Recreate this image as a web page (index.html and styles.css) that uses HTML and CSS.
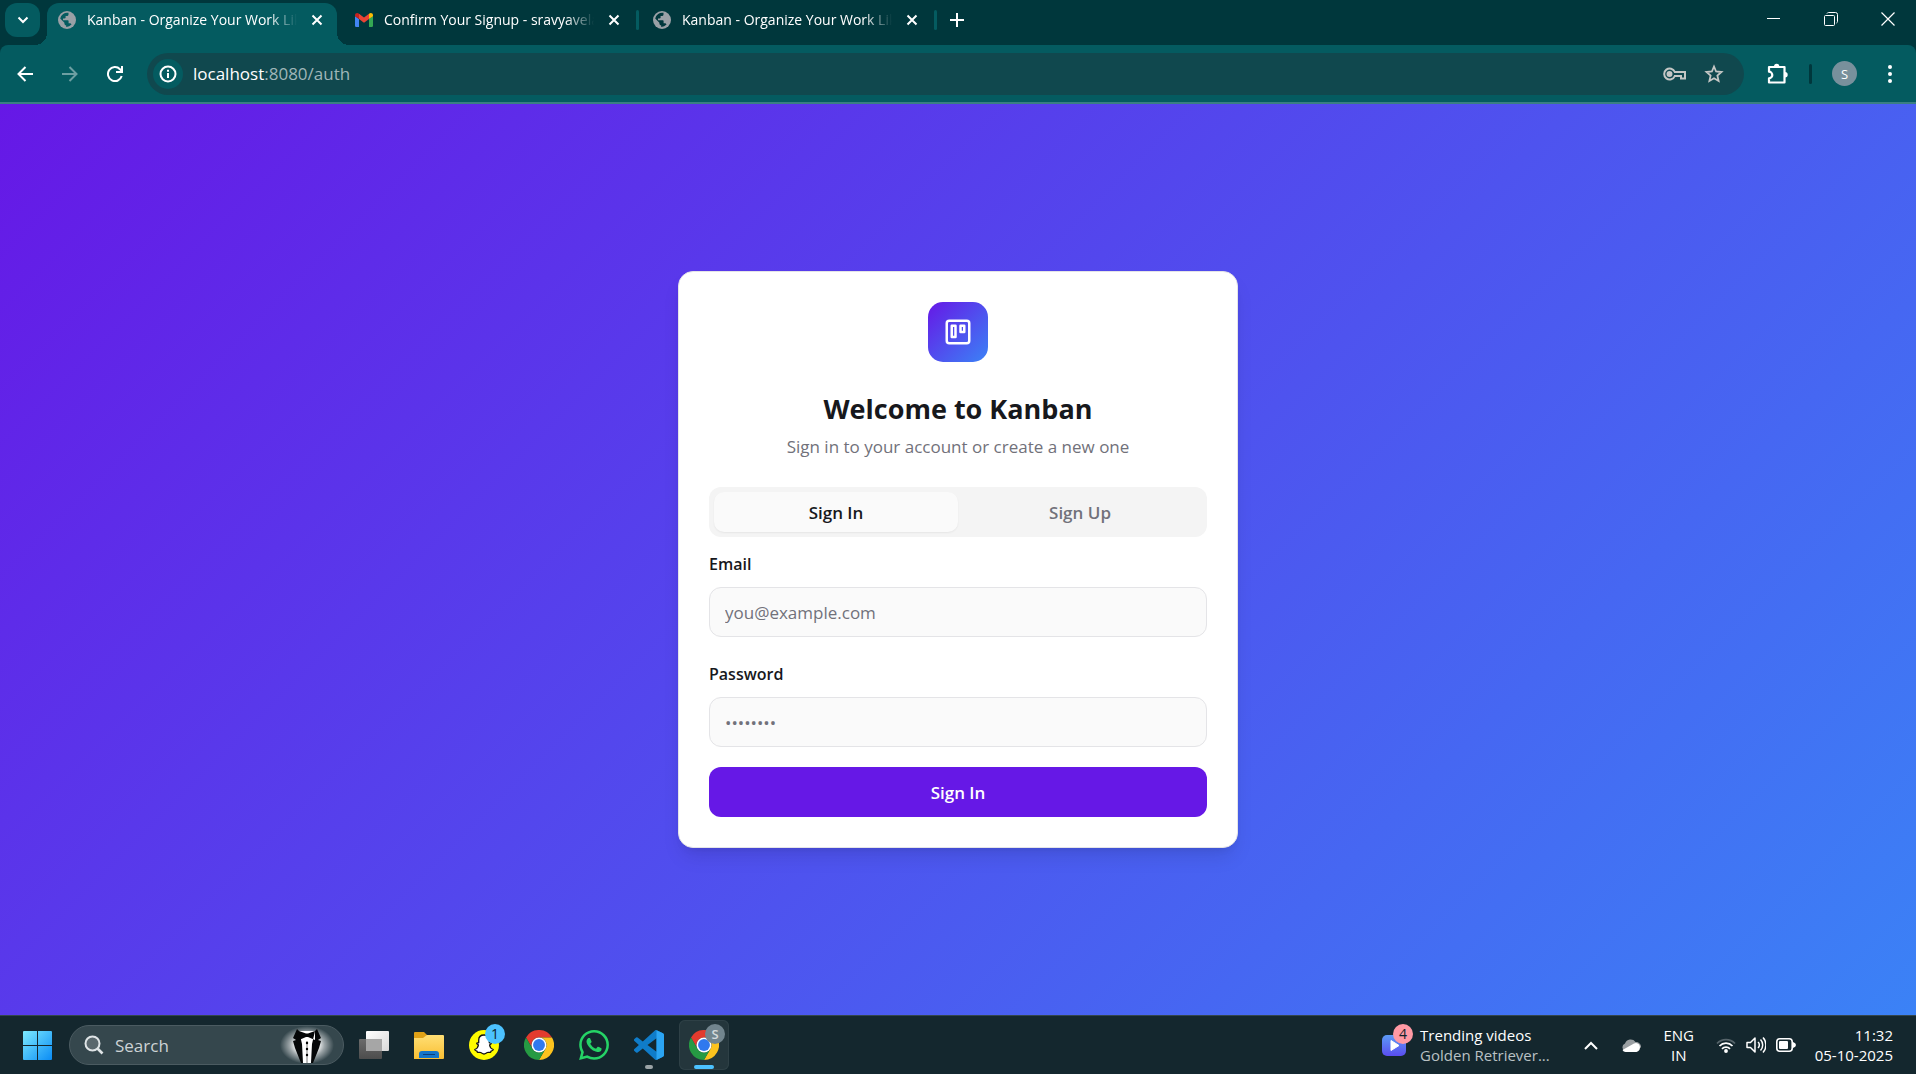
FILE: index.html
```
<!DOCTYPE html>
<html lang="en">
<head>
<meta charset="utf-8">
<meta name="viewport" content="width=device-width, initial-scale=1">
<title>Kanban - Organize Your Work Like Never Before</title>
<link rel="stylesheet" href="styles.css">
</head>
<body>
<svg class="defs" aria-hidden="true">
  <defs>
    <linearGradient id="g-win" x1="0" y1="0" x2="1" y2="1"><stop offset="0" stop-color="#7deaff"/><stop offset="1" stop-color="#0a8cf5"/></linearGradient>
    <linearGradient id="g-folder" x1="0" y1="0" x2="0" y2="1"><stop offset="0" stop-color="#ffdf75"/><stop offset="1" stop-color="#f9bf33"/></linearGradient>
    <linearGradient id="g-video" x1="0" y1="0" x2="0" y2="1"><stop offset="0" stop-color="#5c9bf5"/><stop offset="1" stop-color="#5a4df0"/></linearGradient>
    <linearGradient id="g-back" x1="0" y1="0" x2="0" y2="1"><stop offset="0" stop-color="#6b6b6b"/><stop offset="1" stop-color="#4d4d4d"/></linearGradient>
    <linearGradient id="g-front" x1="0" y1="0" x2="1" y2="1"><stop offset="0" stop-color="#ffffff"/><stop offset="1" stop-color="#d9d9d9"/></linearGradient>
    <radialGradient id="g-glow"><stop offset="0.4" stop-color="#ffffff"/><stop offset="0.65" stop-color="#ffffff" stop-opacity="0.5"/><stop offset="1" stop-color="#ffffff" stop-opacity="0"/></radialGradient>
    <symbol id="globe" viewBox="0 0 18 18">
      <circle cx="9" cy="9" r="9" fill="#9aa0a6"/>
      <path fill="currentColor" d="M10.500 1.800V3.400C10.500 4.500 9.600 5 8.600 5H7.600V6.600C7.600 7.200 7.100 7.500 6.600 7.500H5V9.200H9.600C10.200 9.200 10.600 9.600 10.600 10.200V12.200H11.600C12.500 12.200 13.200 12.700 13.500 13.500A7 7 0 0 1 8.200 16V14.400C7.200 14.400 6.400 13.600 6.400 12.600V11.800L2.200 7.500A7 7 0 0 1 10.500 1.800Z"/>
    </symbol>
    <symbol id="cross" viewBox="0 0 12 12"><path d="M1.500 1.500l9 9m0-9l-9 9" fill="none" stroke="currentColor" stroke-width="2"/></symbol>
    <symbol id="chrome" viewBox="0 0 48 48">
      <path fill="#e33b2e" d="M24 12H44.800A24 24 0 0 0 3.200 12L13.600 30A12 12 0 0 1 24 12z"/>
      <path fill="#fcc31e" d="M34.400 30L24 48A24 24 0 0 0 44.800 12H24A12 12 0 0 1 34.400 30z"/>
      <path fill="#269a43" d="M13.600 30L3.200 12A24 24 0 0 0 24 48L34.400 30A12 12 0 0 1 13.600 30z"/>
      <circle cx="24" cy="24" r="12" fill="#fff"/><circle cx="24" cy="24" r="9.500" fill="#3079ee"/>
    </symbol>
  </defs>
</svg>

<header class="browser">
  <div class="tabstrip">
    <button class="tab-search" aria-label="Search tabs"><svg width="12" height="8" viewBox="0 0 12 8"><path d="M1.500 1.500L6 6l4.500-4.500" fill="none" stroke="currentColor" stroke-width="2"/></svg></button>
    <div class="tab active">
      <svg class="favicon" width="18" height="18"><use href="#globe"/></svg>
      <span class="tab-title">Kanban - Organize Your Work Like</span>
      <button class="tab-close" aria-label="Close tab"><svg width="12" height="12"><use href="#cross"/></svg></button>
    </div>
    <div class="tab">
      <svg class="favicon" width="18" height="18" viewBox="0 0 18 18"><path fill="#4285f4" d="M0 5l4 3v8H1.200Q0 16 0 14.800z"/><path fill="#34a853" d="M18 5l-4 3v8h2.800q1.200 0 1.200-1.200z"/><path fill="#c5221f" d="M0 4.500C0 2 2.400 1.500 4 2.700V8L0 5.200z"/><path fill="#fbbc04" d="M18 4.500C18 2 15.600 1.500 14 2.700V8l4-2.800z"/><path fill="#ea4335" d="M4 2.700l5 3.800 5-3.800V8l-5 3.800L4 8z"/></svg>
      <span class="tab-title">Confirm Your Signup - sravyavelaga</span>
      <button class="tab-close" aria-label="Close tab"><svg width="12" height="12"><use href="#cross"/></svg></button>
    </div>
    <div class="tab">
      <svg class="favicon" width="18" height="18"><use href="#globe"/></svg>
      <span class="tab-title">Kanban - Organize Your Work Like</span>
      <button class="tab-close" aria-label="Close tab"><svg width="12" height="12"><use href="#cross"/></svg></button>
    </div>
    <button class="new-tab" aria-label="New tab"><svg width="14" height="14" viewBox="0 0 14 14"><path d="M7 0v14M0 7h14" fill="none" stroke="currentColor" stroke-width="2"/></svg></button>
    <div class="window-controls">
      <button aria-label="Minimize"><svg width="14" height="14" viewBox="0 0 14 14"><path d="M0 6.500h13" stroke="currentColor"/></svg></button>
      <button aria-label="Restore"><svg width="14" height="14" viewBox="0 0 14 14" fill="none" stroke="currentColor"><rect x="0.500" y="3.500" width="10" height="10" rx="1"/><path d="M3 1.500q.5-1 1.500-1h7q2 0 2 2v7q0 1-1 1.500"/></svg></button>
      <button aria-label="Close"><svg width="14" height="14" viewBox="0 0 14 14"><path d="M.5.5l13 13m0-13l-13 13" stroke="currentColor" stroke-width="1.200"/></svg></button>
    </div>
  </div>
  <div class="toolbar">
    <nav class="nav-buttons">
      <button aria-label="Back"><svg width="16" height="16" viewBox="0 0 16 16"><path d="M16 8H2M8.500 1L1.500 8l7 7" fill="none" stroke="currentColor" stroke-width="2"/></svg></button>
      <button aria-label="Forward" disabled><svg width="16" height="16" viewBox="0 0 16 16"><path d="M0 8h14M7.500 1l7 7-7 7" fill="none" stroke="currentColor" stroke-width="2"/></svg></button>
      <button aria-label="Reload"><svg width="16" height="16" viewBox="0 0 16 16"><path d="M14.700 10A7 7 0 1 1 13 3.200L15 5.500M15 0v6H9" fill="none" stroke="currentColor" stroke-width="2"/></svg></button>
    </nav>
    <div class="omnibox">
      <button class="site-info" aria-label="View site information"><svg width="18" height="18" viewBox="0 0 18 18" fill="none" stroke="currentColor" stroke-width="2"><circle cx="9" cy="9" r="7.500"/><path d="M9 8v5M9 4.800v2"/></svg></button>
      <div class="url">localhost<span>:8080/auth</span></div>
      <button aria-label="Passwords"><svg width="23" height="14" viewBox="0 0 23 14" fill="none" stroke="currentColor" stroke-width="2"><path d="M11.800 5H22v6.500h-4V9h-6.200A5.500 5.500 0 1 1 11.800 5z"/><circle cx="6.500" cy="7" r="2" fill="currentColor"/></svg></button>
      <button aria-label="Bookmark this tab"><svg width="20" height="20" viewBox="0 0 20 20" fill="none" stroke="currentColor" stroke-width="1.800"><path d="M10 2.500l2.100 5 5.400.5-4.100 3.600 1.200 5.400L10 14.200 5.400 17l1.200-5.400L2.500 8l5.400-.5z"/></svg></button>
    </div>
    <button class="extensions" aria-label="Extensions"><svg width="22" height="22" viewBox="0 0 22 22"><path d="M2 4h15.500v15.500H2v-4.200a3.300 3.300 0 0 0 0-6.600z" fill="none" stroke="currentColor" stroke-width="2.200" stroke-linejoin="round"/><path d="M7 3.500a2.700 2.700 0 0 1 5.400 0zM18 9a2.700 2.700 0 0 1 0 5.400z" fill="currentColor"/></svg></button>
    <span class="divider"></span>
    <button class="avatar" aria-label="Profile">S</button>
    <button class="menu" aria-label="Menu"><svg width="4" height="18" viewBox="0 0 4 18" fill="currentColor"><circle cx="2" cy="2" r="2"/><circle cx="2" cy="9" r="2"/><circle cx="2" cy="16" r="2"/></svg></button>
  </div>
</header>

<main class="page">
  <section class="card">
    <div class="logo"><svg width="30" height="30" viewBox="0 0 24 24" fill="none" stroke="#fff" stroke-width="2" stroke-linecap="round" stroke-linejoin="round"><rect x="3" y="3" width="18" height="18" rx="2"/><rect x="7" y="7" width="3" height="9"/><rect x="14" y="7" width="3" height="5"/></svg></div>
    <h1>Welcome to Kanban</h1>
    <p class="subtitle">Sign in to your account or create a new one</p>
    <div class="tabs" role="tablist">
      <button role="tab" aria-selected="true">Sign In</button>
      <button role="tab" aria-selected="false">Sign Up</button>
    </div>
    <form>
      <div class="field">
        <label for="email">Email</label>
        <input id="email" type="email" placeholder="you@example.com">
      </div>
      <div class="field">
        <label for="password">Password</label>
        <input id="password" type="password" placeholder="••••••••">
      </div>
      <button class="submit" type="button">Sign In</button>
    </form>
  </section>
</main>

<footer class="taskbar">
  <button class="app start" aria-label="Start"><svg width="29" height="29" viewBox="0 0 29 29"><path fill="url(#g-win)" d="M1 0h13v14H0V1q0-1 1-1zM15 0h13q1 0 1 1v13H15zM0 15h14v14H1q-1 0-1-1zM15 15h14v13q0 1-1 1H15z"/></svg></button>
  <div class="search">
    <svg width="20" height="20" viewBox="0 0 20 20" fill="none" stroke="#dfe4e6" stroke-width="2"><circle cx="8.500" cy="8.500" r="7" fill="#5a686d"/><path d="M13.500 13.500l5 5" stroke-width="2.600"/></svg>
    <input type="text" placeholder="Search" aria-label="Search">
    <svg class="tuxedo" width="56" height="38" viewBox="0 0 56 38">
      <ellipse cx="28" cy="19" rx="27" ry="19" fill="url(#g-glow)"/>
      <path fill="#fff" d="M20 5l16 0 1 10-5 22h-9l-5-22z"/>
      <path fill="#050708" d="M18 3l2 2 3 13 1 19h-2L16 22l-2-7 3-1-3-2zM38 3l-2 2-3 13-1 19h2l6-15 2-7-3-1 3-2zM20 5l7 2.500h2L36 5v9l-7-3h-2l-7 3z"/>
      <path d="M28 15v22" stroke="#777" stroke-width="1"/><circle cx="28" cy="17" r="1.200"/><circle cx="28" cy="23" r="1.200"/><circle cx="28" cy="29" r="1.200"/>
    </svg>
  </div>
  <div class="apps">
    <button class="app" aria-label="Task view"><svg width="30" height="30" viewBox="0 0 30 30"><rect y="9" width="23" height="20" rx="1" fill="url(#g-back)"/><rect x="7" y="1" width="23" height="20" rx="1" fill="url(#g-front)"/><path d="M7 9h16v12H7z" fill="#a6a6a6"/></svg></button>
    <button class="app" aria-label="File Explorer"><svg width="30" height="30" viewBox="0 0 30 30"><path fill="#e0a116" d="M0 3q0-1 1-1h9l3 3v6H0z"/><path fill="url(#g-folder)" d="M0 8h9l4-3h16q1 0 1 1v22q0 1-1 1H0z"/><path fill="#1475c8" d="M5 28v-4q0-3 3-3h14q3 0 3 3v4z"/><path d="M9 24.500h12" stroke="#0b3f7a"/></svg></button>
    <button class="app" aria-label="Snapchat, 1 notification"><svg width="30" height="30" viewBox="0 0 30 30"><circle cx="15" cy="15" r="15" fill="#fffc00"/><path fill="#fff" stroke="#111" stroke-width="1.300" stroke-linejoin="round" d="M15 5c3.300 0 5.300 2.300 5.300 5.300v2.500c.7.300 1.600-.2 2 .4.400.8-1.200 1.300-1.700 1.800.3 2.200 1.800 3.900 3.700 4.500.2 1-1.600 1.400-2.300 1.600-.4.500-.1 1.200-.7 1.300-.8.200-2-.4-3 .1-1.100.6-1.900 1.500-3.300 1.500s-2.200-.9-3.300-1.500c-1-.5-2.200.1-3-.1-.6-.1-.3-.8-.7-1.300-.7-.2-2.500-.6-2.300-1.600 1.900-.6 3.400-2.300 3.700-4.500-.5-.5-2.100-1-1.700-1.800.4-.6 1.300-.1 2-.4v-2.500C9.700 7.300 11.700 5 15 5z"/></svg><span class="badge blue">1</span></button>
    <button class="app" aria-label="Google Chrome"><svg width="30" height="30"><use href="#chrome"/></svg></button>
    <button class="app" aria-label="WhatsApp"><svg width="30" height="30" viewBox="0 0 24 24"><path fill="#25d366" d="M17.472 14.382c-.297-.149-1.758-.867-2.030-.967-.273-.099-.471-.148-.670.150-.197.297-.767.966-.940 1.164-.173.199-.347.223-.644.075-.297-.150-1.255-.463-2.390-1.475-.883-.788-1.480-1.761-1.653-2.059-.173-.297-.018-.458.130-.606.134-.133.298-.347.446-.520.149-.174.198-.298.298-.497.099-.198.050-.371-.025-.520-.075-.149-.669-1.612-.916-2.207-.242-.579-.487-.500-.669-.510-.173-.008-.371-.010-.570-.010-.198 0-.520.074-.792.372-.272.297-1.040 1.016-1.040 2.479 0 1.462 1.065 2.875 1.213 3.074.149.198 2.096 3.200 5.077 4.487.709.306 1.262.489 1.694.625.712.227 1.360.195 1.871.118.571-.085 1.758-.719 2.006-1.413.248-.694.248-1.289.173-1.413-.074-.124-.272-.198-.570-.347m-5.421 7.403h-.004a9.870 9.870 0 0 1-5.031-1.378l-.361-.214-3.741.982.998-3.648-.235-.374a9.860 9.860 0 0 1-1.510-5.260c.001-5.450 4.436-9.884 9.888-9.884 2.640 0 5.122 1.030 6.988 2.898a9.825 9.825 0 0 1 2.893 6.994c-.003 5.450-4.437 9.884-9.885 9.884m8.413-18.297A11.815 11.815 0 0 0 12.050 0C5.495 0 .160 5.335.157 11.892c0 2.096.547 4.142 1.588 5.945L.057 24l6.305-1.654a11.882 11.882 0 0 0 5.683 1.448h.005c6.554 0 11.890-5.335 11.893-11.893a11.821 11.821 0 0 0-3.480-8.413Z"/></svg></button>
    <button class="app running" aria-label="Visual Studio Code"><svg width="30" height="30" viewBox="0 0 24 24"><path fill="#0f7cc9" d="M23.150 2.587L18.210.210a1.494 1.494 0 0 0-1.705.290l-9.460 8.630-4.120-3.128a.999.999 0 0 0-1.276.057L.327 7.261A1 1 0 0 0 .326 8.740L3.899 12 .326 15.260a1 1 0 0 0 .001 1.479L1.650 17.940a.999.999 0 0 0 1.276.057l4.120-3.128 9.460 8.630a1.492 1.492 0 0 0 1.704.290l4.942-2.377A1.500 1.500 0 0 0 24 20.060V3.939a1.500 1.500 0 0 0-.850-1.352zm-5.146 14.861L10.826 12l7.178-5.448v10.896z"/><path fill="#2ba5f3" d="M18 .1L23.150 2.587A1.500 1.500 0 0 1 24 3.939V20.060a1.500 1.500 0 0 1-.850 1.352L18 23.900z"/></svg></button>
    <button class="app running current" aria-label="Google Chrome, profile S"><svg width="30" height="30"><use href="#chrome"/></svg><span class="badge grey">S</span></button>
  </div>
  <div class="tray">
    <button class="widget">
      <span class="widget-icon"><svg width="24" height="24" viewBox="0 0 24 24"><rect y="2" width="24" height="21" rx="5" fill="url(#g-video)"/><path d="M9 7.500v10l8-5z" fill="#fff" stroke="#fff" stroke-linejoin="round"/></svg><span class="badge pink">4</span></span>
      <span class="lines"><span>Trending videos</span><span class="dim">Golden Retriever...</span></span>
    </button>
    <button class="chevron" aria-label="Show hidden icons"><svg width="14" height="9" viewBox="0 0 14 9"><path d="M1 8l6-6 6 6" fill="none" stroke="currentColor" stroke-width="2"/></svg></button>
    <button class="cloud" aria-label="OneDrive"><svg width="20" height="14" viewBox="0 0 20 14"><path fill="#9a9fa2" d="M4 5.500A6 6 0 0 1 14.500 4 5 5 0 0 1 20 9.500L9 13H4A4 4 0 0 1 4 5.500z"/><path fill="#fff" d="M1.500 12L13 5.500l2-.5A4.600 4.600 0 0 1 15.500 14H4.500q-2 0-3-2z"/></svg></button>
    <button class="lines language"><span>ENG</span><span>IN</span></button>
    <button class="status" aria-label="Network, sound, battery">
      <svg width="20" height="16" viewBox="0 0 20 16" fill="none" stroke="#fff" stroke-width="1.800"><path d="M1 6.500a12.500 12.500 0 0 1 18 0" stroke="#56646a"/><path d="M3.500 9a9 9 0 0 1 13 0M6 11.800a5.600 5.600 0 0 1 8 0"/><circle cx="10" cy="14" r="1" fill="#fff"/></svg>
      <svg width="20" height="18" viewBox="0 0 20 18" fill="none" stroke="#fff" stroke-width="1.500" stroke-linejoin="round"><path d="M1 6.500h3.500L9 2v14l-4.500-4.500H1zM12 6a4 4 0 0 1 0 6M14.500 3.500a8 8 0 0 1 0 11M17 1.500a11 11 0 0 1 0 15"/></svg>
      <svg width="20" height="14" viewBox="0 0 20 14"><rect x="0.800" y="0.800" width="15.400" height="12.400" rx="3" fill="none" stroke="#fff" stroke-width="1.600"/><rect x="3" y="3" width="9" height="8" rx="1" fill="#fff"/><path d="M17 4q3 1 3 3t-3 3z" fill="#fff"/></svg>
    </button>
    <button class="lines clock"><span>11:32</span><span>05-10-2025</span></button>
  </div>
</footer>
</body>
</html>
```
FILE: styles.css
```
* { box-sizing: border-box; }

body {
  margin: 0;
  min-height: 100vh;
  display: flex;
  flex-direction: column;
  font-family: "Open Sans", "Noto Sans", sans-serif;
  color: #17181c;
}

button {
  padding: 0;
  border: 0;
  background: none;
  color: inherit;
  font: inherit;
  display: flex;
  align-items: center;
  justify-content: center;
}

svg { display: block; flex: none; }
.defs { position: absolute; width: 0; height: 0; }

/* Browser frame */
.browser { background: #00373c; color: #fff; }

.tabstrip {
  height: 45px;
  display: flex;
  align-items: stretch;
  padding: 3px 0 0 5px;
}

.tab-search {
  width: 35px;
  height: 34px;
  margin-right: 7px;
  border-radius: 12px;
  background: #045b60;
}

.tab {
  position: relative;
  width: 298px;
  display: flex;
  align-items: center;
  padding: 0 15px 8px 18px;
  color: #00373c;
}

.tab.active {
  width: 290px;
  padding: 0 14px 8px 11px;
  background: #045b60;
  color: #045b60;
  border-radius: 12px 12px 0 0;
}

.tab.active::before,
.tab.active::after {
  content: "";
  position: absolute;
  bottom: 0;
  width: 12px;
  height: 12px;
}
.tab.active::before { right: 100%; background: radial-gradient(circle at 0 0, transparent 12px, #045b60 12px); }
.tab.active::after { left: 100%; background: radial-gradient(circle at 100% 0, transparent 12px, #045b60 12px); }

.tab:not(.active)::after {
  content: "";
  position: absolute;
  right: -4px;
  top: 7px;
  width: 3px;
  height: 20px;
  border-radius: 2px;
  background: #045b60;
}

.tab-title {
  flex: 1;
  min-width: 0;
  margin: 0 14px 0 11px;
  overflow: hidden;
  white-space: nowrap;
  font-size: 14px;
  line-height: 20px;
  color: #fff;
  mask-image: linear-gradient(to left, transparent, #000 28px);
}

.tab-close { color: #fff; }
.new-tab { width: 48px; padding-bottom: 8px; }

.window-controls { margin-left: auto; display: flex; padding-bottom: 10px; }
.window-controls button { width: 57px; }

.toolbar {
  height: 59px;
  display: flex;
  align-items: center;
  padding-right: 24px;
  background: #045b60;
  border-bottom: 2px solid #3a7f83;
  border-radius: 8px 8px 0 0;
}

.nav-buttons { display: flex; padding: 0 10px 0 2px; }
.nav-buttons button { width: 45px; height: 40px; }
.nav-buttons button:disabled { color: #6d9fa2; }

.omnibox {
  flex: 1;
  height: 42px;
  display: flex;
  align-items: center;
  gap: 18px;
  padding: 0 20px 0 6px;
  border-radius: 21px;
  background: #10484e;
  color: #c4c7c5;
}

.site-info {
  width: 30px;
  height: 30px;
  margin-right: -8px;
  border-radius: 50%;
  background: #045b60;
  color: #fff;
}

.url { flex: 1; font-size: 17px; line-height: 24px; color: #fff; }
.url span { color: #9fb6b8; }

.extensions { margin: 0 20px 0 23px; }
.divider { width: 3px; height: 20px; background: #00373c; border-radius: 2px; }
.avatar {
  width: 25px;
  height: 25px;
  margin: 0 31px 0 20px;
  border-radius: 50%;
  background: #78909c;
  font-size: 13px;
}

/* Sign-in page */
.page {
  flex: 1;
  display: flex;
  align-items: center;
  justify-content: center;
  padding: 20px;
  background: linear-gradient(135deg, #6618e6, #3b82f6);
}

.card {
  width: 100%;
  max-width: 560px;
  padding: 30px;
  border: 1px solid #e4e4e7;
  border-radius: 15px;
  background: #fff;
  box-shadow: 0 12px 20px -4px rgba(0, 0, 0, 0.1), 0 5px 8px -5px rgba(0, 0, 0, 0.1);
  display: flex;
  flex-direction: column;
}

.logo {
  width: 60px;
  height: 60px;
  margin: 0 auto 28px;
  display: flex;
  align-items: center;
  justify-content: center;
  border-radius: 15px;
  background: linear-gradient(135deg, #6618e6, #3b82f6);
}

h1 { margin: 0; font-size: 27px; line-height: 38px; text-align: center; }

.subtitle {
  margin: 6px 0 28px;
  font-size: 17px;
  line-height: 25px;
  text-align: center;
  color: #71717a;
}

.tabs {
  display: flex;
  height: 50px;
  margin-bottom: 15px;
  padding: 5px;
  border-radius: 12px;
  background: #f4f4f4;
  font-size: 17px;
  font-weight: 600;
  color: #71717a;
}
.tabs button { flex: 1; border-radius: 10px; }
.tabs button[aria-selected="true"] {
  background: #fafafa;
  color: #17181c;
  box-shadow: 0 1px 2px rgba(0, 0, 0, 0.06);
}

form { display: flex; flex-direction: column; gap: 20px; }
.field { display: flex; flex-direction: column; gap: 11px; }
.field + .field { margin-top: 5px; }
.field label { font-size: 16px; line-height: 24px; font-weight: 600; }
.field input {
  width: 100%;
  height: 50px;
  padding: 0 15px;
  border: 1px solid #e4e4e7;
  border-radius: 12px;
  background: #fafafa;
  font: inherit;
  font-size: 17px;
}
.field input::placeholder { color: #71717a; }

.submit {
  height: 50px;
  border-radius: 12px;
  background: #6618e6;
  color: #fff;
  font-size: 17px;
  font-weight: 600;
}

/* Taskbar */
.taskbar {
  height: 59px;
  display: flex;
  align-items: center;
  padding: 0 23px;
  border-top: 1px solid #33464d;
  background: #14272e;
  color: #fff;
}

.start { margin-right: 17px; }

.search {
  width: 275px;
  height: 40px;
  display: flex;
  align-items: center;
  gap: 11px;
  padding: 0 8px 0 14px;
  border: 1px solid #4b5b61;
  border-radius: 20px;
  background: #35474d;
}
.search input {
  flex: 1;
  min-width: 0;
  padding: 0;
  border: 0;
  background: none;
  font: inherit;
  font-size: 17px;
}
.search input::placeholder { color: #cdd3d5; }

.apps { display: flex; gap: 5px; margin-left: 5px; }
.app { position: relative; }
.apps .app { width: 50px; height: 50px; border-radius: 6px; }
.apps .running::after {
  content: "";
  position: absolute;
  bottom: 1px;
  width: 8px;
  height: 4px;
  border-radius: 2px;
  background: #9aa3a6;
}
.apps .current { background: #24363c; box-shadow: inset 0 0 0 1px #2e4046; }
.apps .current::after { width: 20px; background: #4cc2ff; }

.badge {
  position: absolute;
  width: 20px;
  height: 20px;
  border-radius: 50%;
  font-size: 14px;
  line-height: 20px;
  text-align: center;
}
.badge.blue { top: 4px; right: 4px; background: #4cc2ff; color: #10222a; }
.badge.grey { top: 4px; right: 4px; background: #72858e; color: #d5dadd; font-size: 13px; font-weight: 600; }
.badge.pink { top: -9px; right: -7px; background: #ff99a4; color: #10222a; }

.tray { display: flex; align-items: center; margin-left: auto; }
.widget { gap: 14px; }
.widget-icon { position: relative; }
.lines { display: flex; flex-direction: column; align-items: flex-start; font-size: 15px; line-height: 20px; }
.dim { color: #b9c1c4; }
.chevron { margin-left: 34px; }
.cloud { margin-left: 23px; }
.language { width: 60px; margin-left: 8px; align-items: center; }
.status { gap: 10px; margin-left: 7px; }
.clock { margin-left: 19px; align-items: flex-end; }
```
